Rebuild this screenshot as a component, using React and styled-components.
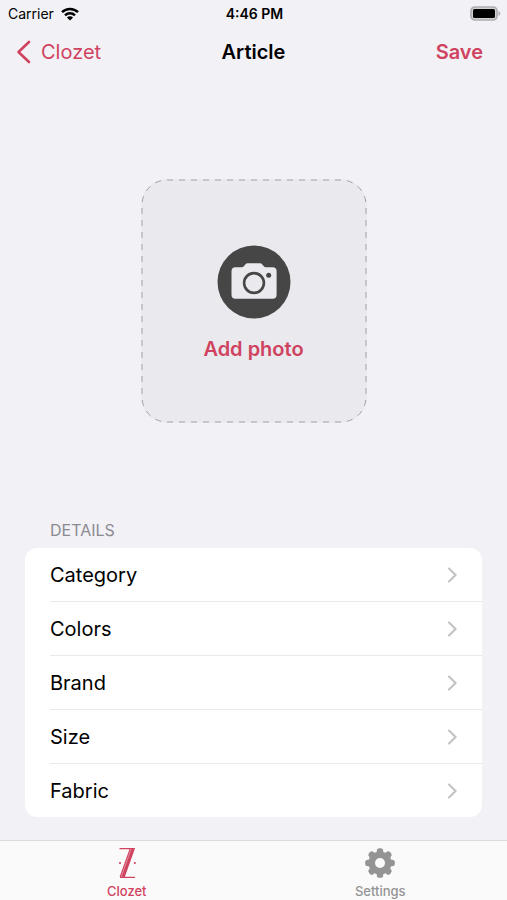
import styled, { createGlobalStyle } from "styled-components";

const details = ["Category", "Colors", "Brand", "Size", "Fabric"];

const App = () => {
  return (
    <>
      <GlobalStyle />
      <Screen>
        <StatusBar>
          <Carrier>
            Carrier
            <WifiIcon />
          </Carrier>
          <Time>4:46 PM</Time>
          <BatteryIcon />
        </StatusBar>

        <NavBar>
          <BackLink href="#clozet">
            <BackIcon />
            Clozet
          </BackLink>
          <Title>Article</Title>
          <SaveButton type="button">Save</SaveButton>
        </NavBar>

        <Main>
          <PhotoButton type="button">
            <DashedOutline aria-hidden="true">
              <rect x="1" y="1" rx="25" ry="25" />
            </DashedOutline>
            <CameraIcon />
            Add photo
          </PhotoButton>

          <Details>
            <SectionTitle>DETAILS</SectionTitle>
            <List>
              {details.map((el) => (
                <Item key={el}>
                  <Row type="button">
                    {el}
                    <ChevronIcon />
                  </Row>
                </Item>
              ))}
            </List>
          </Details>
        </Main>

        <TabBar>
          <Tab href="#clozet" $active>
            <ZIcon />
            Clozet
          </Tab>
          <Tab href="#settings">
            <GearIcon />
            Settings
          </Tab>
        </TabBar>
      </Screen>
    </>
  );
};

export default App;

const WifiIcon = () => (
  <svg width="18" height="14" viewBox="0 0 18 14" aria-hidden="true">
    <g fill="none" stroke="#000" strokeWidth="2.5">
      <path d="M1 5.1a11.6 11.6 0 0 1 16 0" />
      <path d="M4 8.3a7.3 7.3 0 0 1 10 0" />
    </g>
    <path d="M9 13.6L5.9 10.5a4.4 4.4 0 0 1 6.2 0z" />
  </svg>
);

const BatteryIcon = () => (
  <svg width="31" height="15" viewBox="0 0 31 15" aria-hidden="true">
    <rect x="1" y="1" width="26" height="13" rx="4" fill="#d3d2d6" stroke="#aeadb1" strokeWidth="1.7" />
    <rect x="3" y="3" width="22" height="9" rx="1.6" />
    <path d="M28.5 5v5c1.1-.4 1.8-1.3 1.8-2.5S29.6 5.4 28.5 5z" fill="#aeadb1" />
  </svg>
);

const BackIcon = () => (
  <svg width="15" height="24" viewBox="0 0 15 24" aria-hidden="true">
    <path
      d="M13 2L2.5 12 13 22"
      fill="none"
      stroke="currentColor"
      strokeWidth="2.6"
      strokeLinecap="round"
      strokeLinejoin="round"
    />
  </svg>
);

const ChevronIcon = () => (
  <svg width="10" height="16" viewBox="0 0 10 16" aria-hidden="true">
    <path
      d="M2 1.600l6.600 6.400L2 14.400"
      fill="none"
      stroke="#c2c2c5"
      strokeWidth="2.1"
      strokeLinecap="round"
      strokeLinejoin="round"
    />
  </svg>
);

const CameraIcon = () => (
  <svg width="74" height="74" viewBox="0 0 74 74" aria-hidden="true">
    <circle cx="37" cy="37" r="36.5" fill="#464646" />
    <path
      d="M18.500 22.300h6.200c1 0 1.700-.4 2.300-1.200l1.300-1.700c.6-.7 1.400-1.100 2.300-1.100h12.400c.9 0 1.700.4 2.300 1.100l1.300 1.700c.6.8 1.300 1.200 2.300 1.200h6.700a4 4 0 0 1 4 4v23.500a4 4 0 0 1-4 4h-37.100a4 4 0 0 1-4-4v-23.500a4 4 0 0 1 4-4z"
      fill="#e9e9ee"
    />
    <circle cx="37" cy="38" r="9.900" fill="none" stroke="#464646" strokeWidth="2.600" />
    <circle cx="51.700" cy="30.300" r="2.500" fill="#464646" />
  </svg>
);

const ZIcon = () => (
  <svg width="32" height="32" viewBox="0 0 32 32" aria-hidden="true">
    <g fill="none" stroke="currentColor">
      <path d="M8.500 1.600h15.500M9 30.400h15" strokeWidth="1.400" />
      <path d="M19.200 2L9.200 30" strokeWidth="1.200" />
      <path d="M22.200 2L12.200 30" strokeWidth="3" />
      <path d="M20.600 2L10.600 30" strokeWidth="1.500" strokeOpacity="0.6" />
    </g>
    <g fill="currentColor">
      <circle cx="9" cy="16" r="1.100" />
      <circle cx="23.800" cy="16" r="1.100" />
    </g>
  </svg>
);

const GearIcon = () => (
  <svg width="32" height="32" viewBox="0 0 32 32" aria-hidden="true">
    <g fill="currentColor">
      {[0, 45, 90, 135].map((angle) => (
        <rect key={angle} x="12.8" y="1.2" width="6.4" height="29.6" rx="2.6" transform={`rotate(${angle} 16 16)`} />
      ))}
      <circle cx="16" cy="16" r="11.6" />
    </g>
    <circle cx="16" cy="16" r="5" fill="#fafafa" />
  </svg>
);

const GlobalStyle = createGlobalStyle`
  * {
    box-sizing: border-box;
    margin: 0;
    padding: 0;
  }

  body {
    background-color: #f2f1f6;
    color: #000;
    font-family: Inter, "Liberation Sans", sans-serif;
  }

  button {
    border: none;
    background: none;
    color: inherit;
    font: inherit;
    cursor: pointer;
  }

  a {
    text-decoration: none;
  }

  svg {
    display: block;
    flex-shrink: 0;
  }
`;

const Screen = styled.div`
  display: flex;
  flex-direction: column;
  min-height: 100vh;
`;

const StatusBar = styled.div`
  display: grid;
  grid-template-columns: 1fr auto 1fr;
  align-items: center;
  height: 27px;
  padding: 0 6px 0 8px;
  font-size: 14px;

  > svg {
    justify-self: end;
  }
`;

const Carrier = styled.div`
  display: flex;
  align-items: center;
  gap: 7px;
`;

const Time = styled.p`
  font-weight: 600;
`;

const NavBar = styled.header`
  display: grid;
  grid-template-columns: 1fr auto 1fr;
  align-items: center;
  height: 50px;
  padding: 0 16px;
  font-size: 20px;
`;

const BackLink = styled.a`
  display: flex;
  align-items: center;
  gap: 10px;
  color: #d0435f;
`;

const Title = styled.h1`
  font-size: 20px;
  font-weight: 600;
`;

const SaveButton = styled.button`
  justify-self: end;
  padding: 0 8px;
  color: #d0435f;
  font-weight: 600;
`;

const Main = styled.main`
  display: flex;
  flex: 1;
  flex-direction: column;
  padding: 102px 25px 23px;
`;

const PhotoButton = styled.button`
  position: relative;
  display: flex;
  flex-direction: column;
  align-items: center;
  align-self: center;
  justify-content: center;
  gap: 16px;
  width: 226px;
  height: 244px;
  padding-top: 6px;
  border-radius: 26px;
  background-color: #e9e9ee;
  color: #d0435f;
  font-size: 20px;
  font-weight: 600;
  line-height: 28px;
`;

const DashedOutline = styled.svg`
  position: absolute;
  inset: 0;
  width: 100%;
  height: 100%;

  rect {
    width: calc(100% - 2px);
    height: calc(100% - 2px);
    fill: none;
    stroke: #a3a3a8;
    stroke-width: 1px;
    stroke-dasharray: 6 6;
  }
`;

const Details = styled.section`
  margin-top: auto;
`;

const SectionTitle = styled.h2`
  padding: 0 25px;
  margin-bottom: 8px;
  color: #8c8b91;
  font-size: 16px;
  font-weight: 400;
  line-height: 20px;
`;

const List = styled.ul`
  border-radius: 12px;
  background-color: #fff;
  list-style: none;
`;

const Item = styled.li`
  padding-left: 25px;

  &:not(:last-child) > button {
    height: 54px;
    border-bottom: 1px solid #e9e9eb;
  }
`;

const Row = styled.button`
  display: flex;
  align-items: center;
  justify-content: space-between;
  width: 100%;
  height: 53px;
  padding-right: 25px;
  font-size: 20px;
`;

const TabBar = styled.nav`
  display: flex;
  height: 60px;
  border-top: 1px solid #dcdbe0;
  background-color: #fafafa;
`;

const Tab = styled.a`
  display: flex;
  flex: 1;
  flex-direction: column;
  align-items: center;
  padding-top: 6px;
  gap: 4px;
  color: ${({ $active }) => ($active ? "#d0435f" : "#949494")};
  font-size: 13px;
  font-weight: 500;
  line-height: 16px;
`;
